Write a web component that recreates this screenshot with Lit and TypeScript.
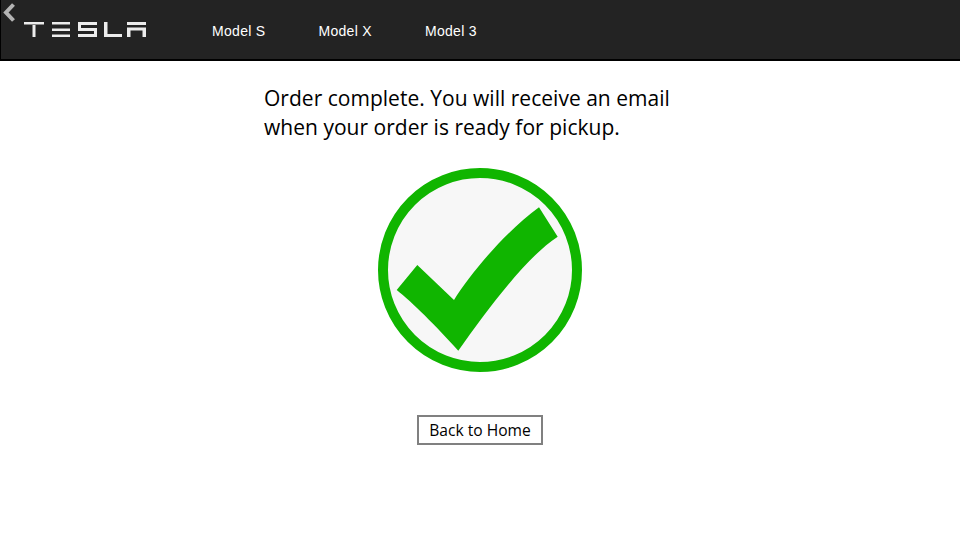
import { html, css, LitElement } from 'lit';
import { customElement } from 'lit/decorators.js';

const MODELS = ['Model S', 'Model X', 'Model 3'];

@customElement('app-root')
export class AppRoot extends LitElement {
  static styles = css`
    :host {
      display: block;
      width: 960px;
      height: 540px;
      overflow: hidden;
      background: #fff;
      position: relative;
    }
    .top {
      box-sizing: border-box;
      height: 61px;
      display: flex;
      background: #232323;
      border-bottom: 2px solid #000;
      border-left: 1px solid #000;
    }
    .back {
      position: absolute;
      left: 2px;
      top: 2px;
    }
    .logo {
      margin: 21px 0 0 23px;
      flex: none;
    }
    .nav {
      display: flex;
      gap: 53px;
      margin: 22px 0 0 64px;
    }
    .nav span {
      color: #fff;
      font: 14px/18px "Liberation Sans", Arial, sans-serif;
      letter-spacing: 0.3px;
      white-space: nowrap;
    }
    main {
      display: flex;
      flex-direction: column;
      align-items: center;
    }
    .msg {
      width: 432px;
      margin-top: 23px;
      font: 21px/29px "Open Sans", sans-serif;
      letter-spacing: 0.02px;
      color: #000;
    }
    .check {
      display: block;
      margin-top: 26px;
    }
    .home {
      margin-top: 43px;
      box-sizing: border-box;
      width: 126px;
      height: 30px;
      border: 2px solid #808080;
      background: #fff;
      color: #000;
      font: 15.6px/26px "Open Sans", sans-serif;
      padding: 0;
      text-align: center;
    }
  `;

  render() {
    return html`
      <div class="top">
        <svg class="logo" width="124" height="17" viewBox="0 0 124 17" fill="#ececec">
          <!-- T -->
          <rect x="0" y="1" width="20" height="2.500" />
          <rect x="8.500" y="4" width="3" height="12" />
          <!-- E -->
          <rect x="28" y="1" width="18" height="2.500" />
          <rect x="28" y="7.500" width="18" height="2.500" />
          <rect x="28" y="13.500" width="18" height="2.500" />
          <!-- S -->
          <path d="M54 1h19v3h-16v3h-3z" />
          <path d="M54 7h19v9h-19v-3h16v-3h-16z" />
          <!-- L -->
          <path d="M80 1h3.500v12h14.500v3h-18z" />
          <!-- A -->
          <rect x="103" y="1" width="19" height="3" />
          <path d="M103 6.500h19v9.500h-3.500v-6.500h-12v6.500h-3.500z" />
        </svg>
        <nav class="nav">
          ${MODELS.map(m => html`<span>${m}</span>`)}
        </nav>
      </div>
      <svg class="back" width="14" height="22" viewBox="0 0 14 22" fill="none">
        <path d="M11.500 2.500 4 10.500 11.500 18.500" stroke="#b4b4b4" stroke-width="4" />
      </svg>
      <main>
        <div class="msg">Order complete. You will receive an email when your order is ready for pickup.</div>
        <svg class="check" width="204" height="204" viewBox="8 8 204 204">
          <circle cx="110" cy="110" r="97" fill="#f7f7f7" stroke="#10b500" stroke-width="10" />
          <path
            d="M169 47.300 187.700 76.700C155 98 116 152 88.300 190.700C66 166 42 142 26.700 130L47.300 105 84 140C100 114 135 72 169 47.300Z"
            fill="#10b500"
          />
        </svg>
        <button class="home">Back to Home</button>
      </main>
    `;
  }
}
